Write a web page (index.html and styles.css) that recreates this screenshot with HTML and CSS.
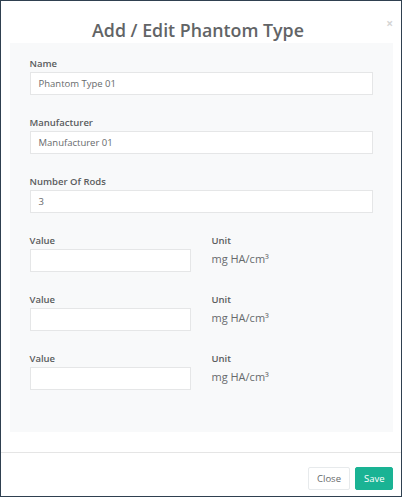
FILE: index.html
```html
<!DOCTYPE html>
<html>
<head>
<meta charset="utf-8">
<link rel="stylesheet" href="styles.css">
</head>
<body>
<div class="modal">
  <div class="modal-header">
    <h4 class="modal-title">Add / Edit Phantom Type</h4>
    <span class="close">×</span>
  </div>
  <div class="modal-body">
    <div class="panel">
      <div class="group">
        <label class="label">Name</label>
        <div class="input">Phantom Type 01</div>
      </div>
      <div class="group">
        <label class="label">Manufacturer</label>
        <div class="input">Manufacturer 01</div>
      </div>
      <div class="group">
        <label class="label">Number Of Rods</label>
        <div class="input">3</div>
      </div>
      <div class="row">
        <div class="group col">
          <label class="label">Value</label>
          <div class="input"></div>
        </div>
        <div class="group col">
          <label class="label">Unit</label>
          <div class="unit">mg HA/cm³</div>
        </div>
      </div>
      <div class="row">
        <div class="group col">
          <label class="label">Value</label>
          <div class="input"></div>
        </div>
        <div class="group col">
          <label class="label">Unit</label>
          <div class="unit">mg HA/cm³</div>
        </div>
      </div>
      <div class="row">
        <div class="group col">
          <label class="label">Value</label>
          <div class="input"></div>
        </div>
        <div class="group col">
          <label class="label">Unit</label>
          <div class="unit">mg HA/cm³</div>
        </div>
      </div>
    </div>
  </div>
  <div class="modal-footer">
    <button class="btn btn-white">Close</button>
    <button class="btn btn-primary">Save</button>
  </div>
</div>
</body>
</html>
```
FILE: styles.css
```css
* { box-sizing: border-box; }
html, body {
  margin: 0;
  padding: 0;
  background: #2f4050;
}
body {
  width: 402px;
  height: 497px;
  font-family: "Open Sans", "Liberation Sans", sans-serif;
  color: #676a6c;
}
.modal {
  width: 402px;
  height: 497px;
  background: #ffffff;
  border: 1px solid #2f4050;
  border-left-width: 1.5px;
  border-right-width: 1.5px;
  display: flex;
  flex-direction: column;
}
.modal-header {
  position: relative;
  height: 42px;
  padding: 16px 6px 0 0;
  text-align: center;
}
.modal-title {
  margin: 0;
  font-size: 17.8px;
  font-weight: 600;
  line-height: 26px;
  color: #626466;
}
.close {
  position: absolute;
  right: 8px;
  top: 17px;
  font-size: 12px;
  font-weight: 700;
  color: #d5d5d5;
  line-height: 12px;
}
.modal-body {
  padding: 0 8px 0 8.5px;
  height: 389px;
}
.panel {
  background: #f8f9fa;
  height: 389px;
  padding: 14px 20px 0 20px;
}
.group {
  margin-bottom: 21px;
}
.label {
  display: block;
  font-size: 9.5px;
  font-weight: 600;
  line-height: 13px;
  color: #5a5c5e;
  margin-bottom: 2px;
}
.input {
  height: 23px;
  background: #ffffff;
  border: 1px solid #e5e6e7;
  font-size: 9.5px;
  line-height: 21px;
  padding: 0 8px;
  color: #676a6c;
}
.row {
  display: flex;
  gap: 21px;
}
.row .col:first-child {
  width: 161px;
  flex: none;
}
.row .col:last-child {
  flex: 1;
}
.unit {
  font-size: 11px;
  line-height: 20px;
  color: #676a6c;
}
.modal-footer {
  margin-top: 20px;
  border-top: 1px solid #e5e5e5;
  display: flex;
  justify-content: flex-end;
  gap: 5px;
  padding: 14px 8px 0 0;
}
.btn {
  height: 23px;
  font-family: "Open Sans", "Liberation Sans", sans-serif;
  font-size: 9.5px;
  padding: 0 8px;
  border-radius: 2px;
  cursor: pointer;
  line-height: 21px;
}
.btn-white {
  background: #ffffff;
  border: 1px solid #e7eaec;
  color: #676a6c;
  width: 42px;
}
.btn-primary {
  background: #1ab394;
  border: 1px solid #1ab394;
  color: #ffffff;
  width: 38px;
}
```
